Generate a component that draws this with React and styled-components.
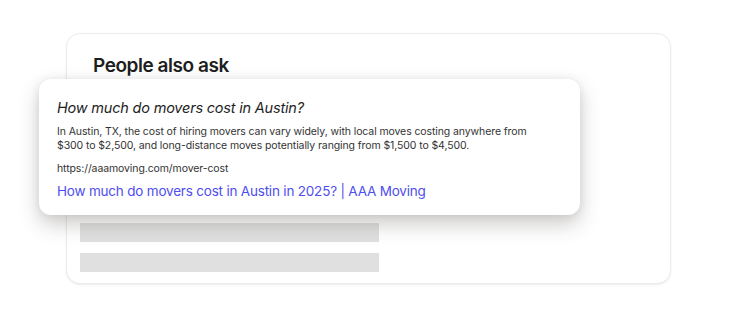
import styled, { createGlobalStyle } from 'styled-components';

const GlobalStyle = createGlobalStyle`
    html, body {
        margin:0;
        padding:0;
        background:#ffffff;
        font-family:Inter, "Noto Sans", sans-serif;
    }
`

const Page = styled.div`
    width:738px;
    height:324px;
    padding:33px 0 0 66px;
    box-sizing:border-box;
`

const Card = styled.div`
    position:relative;
    width:605px;
    height:251px;
    box-sizing:border-box;
    border:1px solid #ececec;
    border-radius:14px;
    box-shadow:0 1px 2px rgba(0,0,0,0.08);
    background:#fff;
    display:flex;
    flex-direction:column;
    justify-content:space-between;
    padding:20px 0 11px 13px;
`

const Heading = styled.h2`
    margin:0 0 0 13px;
    font-size:19px;
    font-weight:600;
    color:#1e1e1e;
    letter-spacing:-0.45px;
`

const Placeholders = styled.div`
    display:flex;
    flex-direction:column;
    gap:11px;
`

const Bar = styled.div`
    width:299px;
    height:19px;
    background:#e0e0e0;
`

const Popup = styled.div`
    position:absolute;
    left:-28px;
    top:45px;
    width:541px;
    height:136px;
    box-sizing:border-box;
    background:#fff;
    border-radius:12px;
    box-shadow:0 9px 20px rgba(60,55,50,0.26), 0 0 8px rgba(0,0,0,0.07);
    padding:20px 18px 0 18px;
    display:flex;
    flex-direction:column;
`

const Question = styled.div`
    font-size:14.5px;
    font-style:italic;
    color:#1e1e1e;
    letter-spacing:-0.2px;
    margin-bottom:9px;
`

const Answer = styled.p`
    margin:0 0 9px 0;
    padding-right:22px;
    font-size:10.5px;
    line-height:14px;
    letter-spacing:-0.1px;
    color:#333;
`

const Url = styled.div`
    font-size:10.5px;
    color:#333;
    letter-spacing:-0.1px;
    margin-bottom:8px;
`

const Link = styled.a`
    font-size:13.5px;
    color:#4e4ef0;
    letter-spacing:-0.2px;
    text-decoration:none;
`

const App = () => {
    return(
        <>
        <GlobalStyle/>
        <Page>
            <Card>
                <Heading>People also ask</Heading>
                <Placeholders>
                    <Bar/>
                    <Bar/>
                </Placeholders>
                <Popup>
                    <Question>How much do movers cost in Austin?</Question>
                    <Answer>In Austin, TX, the cost of hiring movers can vary widely, with local moves costing anywhere from $300 to $2,500, and long-distance moves potentially ranging from $1,500 to $4,500.</Answer>
                    <Url>https://aaamoving.com/mover-cost</Url>
                    <Link href="#">How much do movers cost in Austin in 2025? | AAA Moving</Link>
                </Popup>
            </Card>
        </Page>
        </>
    )
}

export default App;
